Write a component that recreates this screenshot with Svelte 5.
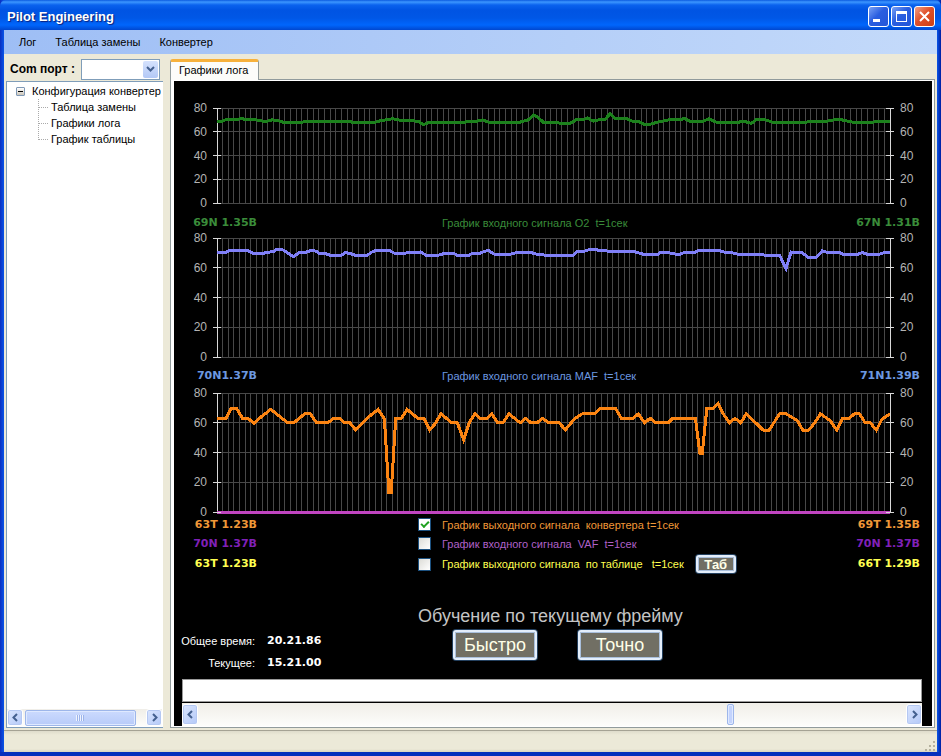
<script>
  const SAMPLES = 119;
  const MAX_LEVEL = 80;
  const levels = [80, 60, 40, 20, 0];
  const gridColumns = Array.from({ length: SAMPLES - 1 }, (_, i) => i + 1);

  const menu = ["Лог", "Таблица замены", "Конвертер"];
  const treeItems = ["Таблица замены", "Графики лога", "График таблицы"];

  // polyline points, "sample,level"
  const o2 =
    "0,69 1,69 1.5,70 3.5,70 4.3,71.5 5,70 7,70 8,69 9,69 9.7,70 10.7,69.5 12,67.5 13,67.5 14,68 15,68 16,69 23,69 24.5,67.5 26,67.5 27,68 28,68 29,69.5 30,70 31,71 32,70 33,69.2 35.5,69 36.5,66 37.5,68 41,68 42,67.5 43.5,67.5 44.5,69 46,69 47,70 48,68 53.5,68 55,70 56,74 56.8,72 57.7,68 60,68 60.5,67.3 62.5,67.3 63.5,70 64.7,70 65.5,71.5 66.5,69 67.5,70 68.5,70 69.5,75 70.4,71 72.5,71 73.4,69 74.4,69 75.4,66.5 76.7,66.5 77.8,68 79.8,70 82,70 82.6,71.5 83.6,69 86,69 87,71 88.3,68 92.2,68 93,69 94.5,67 95.4,70.5 97,70 98.3,68 104.2,68 105,69 108,69 109,70 110.5,70 112.5,68 116,68 117,69 119,69";
  const maf =
    "0,70 1.5,70 2,71.4 5.5,71.4 6.5,69.5 8,69.5 9,70.5 10,70.7 10.5,72.3 11.5,72.3 12.5,70 13.5,67.5 14.5,70 15.5,70.2 16.5,71.5 17.5,71.2 18,69.6 19.5,69.2 20,68.3 22,68.3 22.7,70.2 23.5,69.6 24.5,68.3 26.5,68.3 27.5,70.8 28,71.5 30.5,71.5 31.5,69.5 33,69.5 33.7,70.2 36,70.6 37,68.3 39,68.3 40,69.4 42,69.4 42.5,68.3 44.5,68.3 45,69.4 46.5,69.8 47.3,71 48,71.6 49,69.2 52,69.2 53,70.2 55.5,70.2 56.5,69.2 57.5,69.2 58,68.3 63,68.3 63.7,71 65,71.2 66,72.5 67,72.5 67.7,71.3 73.5,71.1 74.5,70 75.5,69 78,69 78.5,70.4 80,70 81,69.2 82,69.2 82.7,70.5 84.5,70.4 85,71.3 89,71.3 90,70.2 91,70.1 92,69.2 96.3,69 97,68.3 99.5,68.3 100.6,59.4 101.5,70.6 103.5,70 104.5,67 106,67 107,71.3 108,70.2 110,70.3 110.7,69 113.3,69 114.1,70.2 115,69 117,69 118,70.2 119,70.2";
  const converter =
    "0,63 1.6,63 2.5,69.5 3.5,69.5 4.5,63 5.5,63 6.5,59.6 7.5,63 9.5,69 12.5,60 13.6,60 15.5,66 16.5,66 17.6,60 19.6,60 20.6,63 21.6,63 22.6,60 23.5,60 24.5,55.3 26.5,63 28.5,69 29.6,62.5 30.4,13 30.8,13 31.6,63 32.6,63 33.6,69 35.5,63 36.6,63 37.6,55 38.6,59.5 39.6,66 41.5,60 42.5,60 43.6,48.6 44.6,60 45.6,66 46.5,63 47.7,63 48.6,66 49.6,60 50.6,60 51.6,66 53.6,60 54.6,63 55.5,60 56.6,60 57.6,63 58.6,60 60.5,60 61.6,55.3 63.3,63 64.6,66 66.8,66 67.6,69.3 70.5,69.3 71.5,63 73.6,63 74.5,66 75.6,60 76.6,63 77.5,60 79.8,60 80.6,63 84.6,63 85.4,39 85.8,39 86.6,69.3 87.7,69.3 88.6,73 89.5,66 90.6,60 91.6,63 92.6,60 93.6,66 96.6,55 97.6,55 99.5,66 100.6,66 102.6,61.5 103.6,55 104.6,55 105.7,60 106.7,66 108.4,61.5 109.6,55 110.6,63 111.8,63 112.7,66 113.6,66 114.6,60 115.5,60 116.6,55 117.6,62.5 119,66";
  const vaf = "0,0 119,0";

  let showConverter = true;
  let showVaf = false;
  let showTable = false;
  let position = 755;
  let treeScroll = 8;
  let note = "";
  let port = "";
</script>

{#snippet arrow(direction)}
  <svg class="arrow" viewBox="0 0 9 9" width="9" height="9" aria-hidden="true">
    <path d={direction === "left" ? "M6 1 L2.5 4.5 L6 8" : "M3 1 L6.5 4.5 L3 8"} />
  </svg>
{/snippet}

{#snippet chart(lines, small)}
  <div class="chart" class:chart--small={small}>
    <ul class="axis axis--left">
      {#each levels as level}<li>{level}</li>{/each}
    </ul>
    <svg class="plot" viewBox="0 0 {SAMPLES} {MAX_LEVEL}" preserveAspectRatio="none">
      <g transform="translate(0 {MAX_LEVEL}) scale(1 -1)">
        {#each gridColumns as x}
          <line class="plot__grid" x1={x} y1="0" x2={x} y2={MAX_LEVEL} />
        {/each}
        {#each levels as level}
          <line class="plot__grid" x1="0" y1={level} x2={SAMPLES} y2={level} />
        {/each}
        <line class="plot__axis" x1="0" y1="0" x2="0" y2={MAX_LEVEL} />
        <line class="plot__axis" x1={SAMPLES} y1="0" x2={SAMPLES} y2={MAX_LEVEL} />
        {#each lines as line}
          <polyline class="plot__line plot__line--{line.name}" points={line.points} />
        {/each}
      </g>
    </svg>
    <ul class="axis axis--right">
      {#each levels as level}<li>{level}</li>{/each}
    </ul>
  </div>
{/snippet}

<div class="window">
  <header class="title">
    <h1>Pilot Engineering</h1>
    <div class="title__buttons">
      <button class="caption-btn" aria-label="Свернуть">
        <svg viewBox="0 0 19 19" width="19" height="19"><rect x="4" y="12" width="7" height="3" fill="#fff" /></svg>
      </button>
      <button class="caption-btn" aria-label="Развернуть">
        <svg viewBox="0 0 19 19" width="19" height="19">
          <rect x="4.5" y="4.5" width="10" height="10" fill="none" stroke="#fff" />
          <rect x="4" y="4" width="11" height="3" fill="#fff" />
        </svg>
      </button>
      <button class="caption-btn caption-btn--close" aria-label="Закрыть">
        <svg viewBox="0 0 19 19" width="19" height="19"><path d="M5 5 L14 14 M14 5 L5 14" stroke="#fff" stroke-width="2" /></svg>
      </button>
    </div>
  </header>

  <nav class="menu">
    {#each menu as item}
      <button>{item}</button>
    {/each}
  </nav>

  <div class="workspace">
    <aside class="sidebar">
      <div class="port">
        <label for="port">Com порт :</label>
        <div class="port__box">
          <select id="port" bind:value={port}>
            <option value=""></option>
          </select>
          <span class="port__drop">
            <svg viewBox="0 0 9 6" width="9" height="6" aria-hidden="true"><path d="M1 1 L4.5 4.5 L8 1" /></svg>
          </span>
        </div>
      </div>

      <div class="tree">
        <div class="tree__root">
          <button class="tree__toggle" aria-label="Свернуть ветку"></button>
          <span>Конфигурация конвертер</span>
        </div>
        <ul class="tree__items">
          {#each treeItems as item}<li>{item}</li>{/each}
        </ul>
        <div class="scroll scroll--tree">
          <button aria-label="Влево">{@render arrow("left")}</button>
          <input type="range" min="0" max="100" bind:value={treeScroll} aria-label="Прокрутка дерева" />
          <button aria-label="Вправо">{@render arrow("right")}</button>
        </div>
      </div>
    </aside>

    <main class="tabs">
      <div class="tabs__head">
        <button class="tab">Графики лога</button>
      </div>
      <div class="page">
        <div class="log">
          {@render chart([{ name: "o2", points: o2 }], true)}
          <div class="row row--caption o2">
            <b class="from">69N 1.35B</b>
            <span class="text">График входного сигнала O2&nbsp; t=1сек</span>
            <b class="to">67N 1.31B</b>
          </div>

          {@render chart([{ name: "maf", points: maf }], false)}
          <div class="row row--caption maf">
            <b class="from">70N1.37B</b>
            <span class="text">График входного сигнала MAF&nbsp; t=1сек</span>
            <b class="to">71N1.39B</b>
          </div>

          {@render chart(
            [
              { name: "vaf", points: vaf },
              ...(showConverter ? [{ name: "converter", points: converter }] : []),
            ],
            false
          )}
          <div class="series">
            <div class="row converter">
              <b class="from">63T 1.23B</b>
              <input class="check" type="checkbox" id="converter" bind:checked={showConverter} />
              <label class="text" for="converter">График выходного сигнала&nbsp; конвертера t=1сек</label>
              <b class="to">69T 1.35B</b>
            </div>
            <div class="row vaf">
              <b class="from">70N 1.37B</b>
              <input class="check" type="checkbox" id="vaf" bind:checked={showVaf} />
              <label class="text" for="vaf">График входного сигнала&nbsp; VAF&nbsp; t=1сек</label>
              <b class="to">70N 1.37B</b>
            </div>
            <div class="row row--table table">
              <b class="from">63T 1.23B</b>
              <input class="check" type="checkbox" id="table" bind:checked={showTable} />
              <div class="text">
                <label for="table">График выходного сигнала&nbsp; по таблице&nbsp;&nbsp; t=1сек</label>
                <button class="btn btn--small">Таб</button>
              </div>
              <b class="to">66T 1.29B</b>
            </div>
          </div>

          <div class="bottom">
            <dl class="times">
              <dt>Общее время:</dt>
              <dd>20.21.86</dd>
              <dt>Текущее:</dt>
              <dd>15.21.00</dd>
            </dl>
            <section class="learn">
              <h2>Обучение по текущему фрейму</h2>
              <div class="learn__buttons">
                <button class="btn">Быстро</button>
                <button class="btn">Точно</button>
              </div>
            </section>
          </div>

          <div class="position">
            <input class="note" type="text" bind:value={note} aria-label="Сообщение" />
            <div class="scroll">
              <button aria-label="Назад">{@render arrow("left")}</button>
              <input type="range" min="0" max="1000" bind:value={position} aria-label="Позиция в логе" />
              <button aria-label="Вперёд">{@render arrow("right")}</button>
            </div>
          </div>
        </div>
      </div>
    </main>
  </div>

  <footer class="status">
    <svg viewBox="0 0 12 12" width="12" height="12" aria-hidden="true">
      <path d="M9 1h2v2h-2z M9 5h2v2h-2z M5 5h2v2h-2z M9 9h2v2h-2z M5 9h2v2h-2z M1 9h2v2h-2z" fill="#b5b19d" />
    </svg>
  </footer>
</div>

<style>
  :global(body) {
    background: #0a3ac8;
  }

  .window {
    display: flex;
    flex-direction: column;
    box-sizing: border-box;
    min-height: 100vh;
    padding: 0 4px;
    background: linear-gradient(to right, #0a2fc0, #0a55e8 4px, #0a55e8 calc(100% - 4px), #001ea0);
    border-bottom: 4px solid #0530bc;
    font-family: "Liberation Sans", Arial, sans-serif;
    font-size: 11px;
    line-height: 16px;
    color: #000;
  }

  button,
  input,
  select {
    margin: 0;
    padding: 0;
    font: inherit;
    color: inherit;
  }

  ul,
  dl,
  dd,
  h1,
  h2 {
    margin: 0;
    padding: 0;
    list-style: none;
  }

  /* title bar */
  .title {
    display: flex;
    align-items: center;
    justify-content: space-between;
    height: 30px;
    margin: 0 -4px;
    padding: 3px 6px 0 7px;
    box-sizing: border-box;
    border-radius: 6px 6px 0 0;
    background: linear-gradient(#0b5be0, #3c96ff 2px, #0a62ee 5px, #0054e3 10px, #0057e6 18px, #0066fc 25px, #0047cf);
  }

  h1 {
    font-size: 13px;
    line-height: 18px;
    color: #fff;
    text-shadow: 1px 1px 1px #0a1f7a;
  }

  .title__buttons {
    display: flex;
    gap: 2px;
  }

  .caption-btn {
    width: 21px;
    height: 21px;
    border: 1px solid #fff;
    border-radius: 3px;
    background: linear-gradient(135deg, #7aa2f5, #2a5ee0 45%, #2456d8);
  }

  .caption-btn--close {
    background: linear-gradient(135deg, #f0a088, #e0502a 45%, #cc3f14);
  }

  .caption-btn svg {
    display: block;
  }

  .menu {
    display: flex;
    height: 24px;
    padding-left: 9px;
    background: linear-gradient(to right, #9ebef5, #c4dafa);
  }

  .menu button {
    padding: 0 6px;
    margin-right: 7px;
    border: 0;
    background: none;
  }

  .workspace {
    flex: 1;
    display: flex;
    gap: 7px;
    padding: 0 2px 2px;
    background: #ece9d8;
    border-bottom: 1px solid #a5a294;
  }

  /* left side */
  .sidebar {
    display: flex;
    flex-direction: column;
    width: 157px;
    flex: none;
  }

  .port {
    display: flex;
    align-items: center;
    justify-content: space-between;
    height: 27px;
    padding: 3px 3px 0 4px;
    box-sizing: border-box;
    font-size: 12px;
    font-weight: bold;
  }

  .port__box {
    display: flex;
    width: 79px;
    height: 21px;
    box-sizing: border-box;
    border: 1px solid #7f9db9;
    background: #fff;
  }

  .port select {
    flex: 1;
    min-width: 0;
    border: 0;
    background: none;
    appearance: none;
  }

  .port__drop {
    display: flex;
    align-items: center;
    justify-content: center;
    width: 15px;
    margin: 1px;
    border-radius: 2px;
    background: linear-gradient(#d5e2fd, #b3c8f6);
    pointer-events: none;
  }

  .port__drop path,
  .arrow path {
    fill: none;
    stroke: #44608f;
    stroke-width: 2;
  }

  .tree {
    flex: 1;
    display: flex;
    flex-direction: column;
    box-sizing: border-box;
    padding: 1px 1px 1px 0;
    border: solid #7f9db9;
    border-width: 1px 0 1px 1px;
    background: #fff;
  }

  .tree__root {
    display: flex;
    align-items: center;
    gap: 7px;
    padding-left: 9px;
    white-space: nowrap;
  }

  .tree__toggle {
    flex: none;
    width: 9px;
    height: 9px;
    border: 1px solid #7f98b5;
    border-radius: 1px;
    background: linear-gradient(#000, #000) center / 5px 1px no-repeat, linear-gradient(#fff, #ccc6ba);
  }

  .tree__items {
    flex: 1;
    padding-left: 31px;
  }

  .tree__items li {
    display: flex;
    align-items: center;
    gap: 3px;
    background: repeating-linear-gradient(#aaa 0 1px, transparent 1px 2px) left / 1px 100% no-repeat;
  }

  .tree__items li:last-child {
    background-size: 1px 8px;
    background-position: top left;
  }

  .tree__items li::before {
    content: "";
    width: 10px;
    border-top: 1px dotted #aaa;
  }

  /* scroll bars */
  .scroll {
    display: flex;
    align-items: stretch;
    gap: 1px;
    height: 23px;
    padding: 1px 0;
    box-sizing: border-box;
    background: linear-gradient(#f0eee8, #fdfdfb);
  }

  .scroll--tree {
    height: 17px;
    padding: 0;
  }

  .scroll button {
    display: flex;
    align-items: center;
    justify-content: center;
    width: 16px;
    flex: none;
    border: 1px solid #fff;
    border-radius: 3px;
    box-shadow: inset 0 0 0 1px #b5c8f2;
    background: linear-gradient(135deg, #dbe6fe, #b4c9f8);
  }

  .scroll input {
    flex: 1;
    min-width: 0;
    appearance: none;
    background: none;
  }

  .scroll input::-webkit-slider-thumb {
    appearance: none;
    width: 7px;
    height: 21px;
    border: 1px solid #9db6ea;
    border-radius: 2px;
    background: #c3d3fd;
    box-shadow: inset 0 0 0 1px #dfe9ff;
  }

  .scroll--tree input::-webkit-slider-thumb {
    width: 111px;
    height: 16px;
    background: repeating-linear-gradient(to right, #eef3ff 0 1px, #9cb4ea 1px 2px) center / 8px 6px no-repeat,
      linear-gradient(#cbdafe, #b8cbf9);
  }

  /* tab page */
  .tabs {
    flex: 1;
    min-width: 0;
    display: flex;
    flex-direction: column;
  }

  .tabs__head {
    height: 25px;
    padding-top: 5px;
    box-sizing: border-box;
  }

  .tab {
    position: relative;
    height: 21px;
    padding: 0 10px 3px 8px;
    border: 1px solid #919b9c;
    border-top: 3px solid #f7b13c;
    border-bottom: 0;
    border-radius: 3px 3px 0 0;
    background: #fcfcfa;
    line-height: 16px;
  }

  .page {
    flex: 1;
    display: flex;
    padding: 1px 2px 1px 3px;
    border: 1px solid #919b9c;
    background: #fff;
  }

  .log {
    flex: 1;
    min-width: 0;
    display: flex;
    flex-direction: column;
    padding-top: 27px;
    background: #000;
    color: #fff;
  }

  .chart {
    display: flex;
    height: 119px;
    color: #b4b4b4;
    font-size: 12px;
  }

  .chart--small {
    height: 95px;
  }

  .axis {
    display: flex;
    flex-direction: column;
    justify-content: space-between;
    width: 43px;
    margin: -8px 0;
    flex: none;
    z-index: 1;
  }

  .axis li {
    display: flex;
    align-items: center;
    gap: 6px;
  }

  .axis--left li {
    justify-content: flex-end;
    margin-right: -4px;
  }

  .axis--right {
    width: 42px;
  }

  .axis--right li {
    margin-left: -4px;
  }

  .axis--left li::after,
  .axis--right li::before {
    content: "";
    width: 8px;
    height: 1px;
    background: #d8d8d8;
  }

  .plot {
    flex: 1;
    min-width: 0;
    height: 100%;
    overflow: visible;
  }

  .plot line,
  .plot polyline {
    vector-effect: non-scaling-stroke;
    fill: none;
  }

  .plot__grid {
    stroke: #484848;
    shape-rendering: crispEdges;
  }

  .plot__axis {
    stroke: #d8d8d8;
    shape-rendering: crispEdges;
  }

  .plot__line {
    stroke-width: 3;
    shape-rendering: crispEdges;
  }

  .plot__line--o2 {
    stroke: #1c811c;
  }

  .plot__line--maf {
    stroke: #8080f8;
  }

  .plot__line--converter {
    stroke: #fb8412;
  }

  .plot__line--vaf {
    stroke: #c044c0;
  }

  /* readings and captions */
  .row {
    display: grid;
    grid-template-columns: 83px 161fr 24px 395fr 83px;
    align-items: center;
    height: 19px;
    padding-right: 12px;
    white-space: nowrap;
  }

  .row--caption {
    height: auto;
    padding-top: 11px;
    padding-bottom: 9px;
  }

  .row--caption.o2 {
    padding-top: 12px;
    padding-bottom: 7px;
  }

  .row--table {
    height: 22px;
  }

  .row b {
    grid-row: 1;
    text-align: right;
    font-family: "DejaVu Sans", Verdana, sans-serif;
  }

  .from {
    grid-column: 1;
  }

  .check {
    grid-column: 3;
    grid-row: 1;
    width: 13px;
    height: 13px;
    border: 1px solid #1c5180;
    background: linear-gradient(135deg, #dcdcd7, #fff);
    appearance: none;
  }

  .check:checked {
    background: #fff;
  }

  .check:checked::after {
    content: "";
    display: block;
    width: 6px;
    height: 3px;
    margin: 2px 0 0 2px;
    border: solid #21a121;
    border-width: 0 0 2px 2px;
    transform: rotate(-45deg);
  }

  .text {
    grid-column: 4;
    grid-row: 1;
  }

  div.text {
    display: flex;
    align-items: center;
    gap: 12px;
  }

  .to {
    grid-column: 5;
  }

  .series {
    padding-top: 3px;
  }

  .o2 {
    color: #3a8c3a;
  }

  .maf {
    color: #6c98e0;
  }

  .converter {
    color: #f09838;
  }

  .vaf {
    color: #b060c8;
  }

  .vaf b {
    color: #8020b8;
  }

  .table {
    color: #ffff50;
  }

  .btn {
    min-width: 84px;
    height: 30px;
    border: 2px solid #e4eefb;
    border-radius: 3px;
    box-shadow: inset 0 0 0 1px #a9bfdc, 0 0 0 1px #24405e;
    background: #716f64;
    color: #ffffe8;
    font-size: 18px;
    line-height: 24px;
  }

  .btn--small {
    min-width: 40px;
    height: 18px;
    font-size: 13px;
    font-weight: bold;
    line-height: 13px;
  }

  /* learning block */
  .bottom {
    flex: 1;
    display: grid;
    grid-template-columns: 83px 161fr 502fr;
    align-content: start;
    padding: 30px 12px 0 0;
  }

  .times {
    grid-column: 1 / 3;
    display: grid;
    grid-template-columns: 81px 1fr;
    align-self: end;
    column-gap: 12px;
    margin-bottom: -14px;
    line-height: 22px;
  }

  .times dt {
    text-align: right;
    white-space: nowrap;
  }

  .times dd {
    font-family: "DejaVu Sans", Verdana, sans-serif;
    font-weight: bold;
  }

  h2 {
    font-size: 18px;
    font-weight: normal;
    line-height: 22px;
    color: #c4c4c4;
  }

  .learn__buttons {
    display: flex;
    gap: 41px;
    padding: 3px 0 0 35px;
  }

  .position {
    margin: 0 10px 0 8px;
    display: flex;
    flex-direction: column;
    gap: 1px;
  }

  .note {
    height: 23px;
    box-sizing: border-box;
    padding: 0 4px;
    border: 1px solid #9a9a9a;
    border-radius: 0;
    background: #fff;
    color: #000;
  }

  .status {
    display: flex;
    align-items: flex-end;
    justify-content: flex-end;
    height: 21px;
    padding: 0 1px 0 0;
    background: linear-gradient(#dedbcb, #ece9d8 4px, #ece9d8 18px, #d8d4c0);
  }
</style>
